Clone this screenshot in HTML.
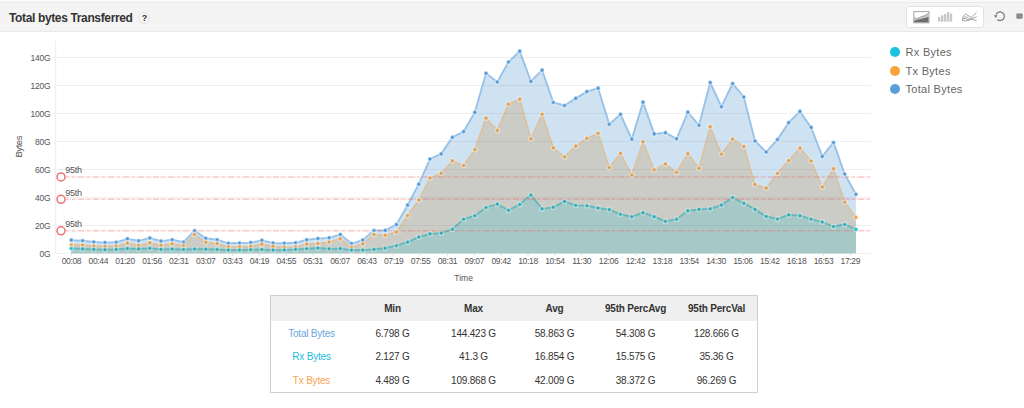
<!DOCTYPE html>
<html><head><meta charset="utf-8">
<style>
html,body{margin:0;padding:0;background:#fff;}
body{width:1024px;height:408px;overflow:hidden;position:relative;font-family:"Liberation Sans",sans-serif;}
svg text{font-family:"Liberation Sans",sans-serif;}
.top{position:absolute;left:0;top:0;width:1024px;height:2px;background:#f9f9f9;}
.hdr{position:absolute;left:0;top:2px;width:1024px;height:30px;background:#f4f4f4;border-top:1px solid #ebebeb;border-bottom:1px solid #e9e9e9;box-sizing:border-box;}
.title{position:absolute;left:9px;top:11px;font-size:12px;font-weight:bold;color:#333;letter-spacing:-0.36px;}
.q{position:absolute;left:138px;top:11.5px;width:12px;height:12px;border:1px solid #e4e4e4;border-radius:50%;background:#f6f6f6;box-sizing:border-box;font-size:9px;font-weight:bold;color:#333;text-align:center;line-height:11px;letter-spacing:-0.5px;text-indent:0.5px;}
.btns{position:absolute;left:906px;top:6px;width:78px;height:22px;background:#fff;border:1px solid #e2e2e2;border-radius:3px;box-sizing:border-box;}
.leg{position:absolute;left:890px;font-size:11px;color:#666;letter-spacing:0.3px;}
.leg i{position:absolute;left:0;top:1px;width:10px;height:10px;border-radius:50%;}
.leg span{position:absolute;left:15.5px;top:0;white-space:nowrap;}
table{position:absolute;left:270px;top:295px;width:488px;border-collapse:collapse;border:1px solid #cfcfcf;font-size:10px;color:#333;letter-spacing:-0.2px;}
th{background:#efefef;height:25px;font-weight:bold;padding:0;text-align:center;width:81px;}
td{height:22.67px;padding:1px 0 0 0;text-align:center;}
</style></head><body>
<div class="top"></div><div class="hdr"></div>
<div class="title">Total bytes Transferred</div>
<div class="q">?</div>
<div class="btns"></div>
<svg width="1024" height="32" style="position:absolute;left:0;top:0">
<rect x="913.8" y="11.6" width="15.2" height="11.2" fill="#fff" stroke="#a2a2a2" stroke-width="1"/>
<polygon points="914.3,17.6 916.9,18.7 920.8,16.9 924.7,15.6 928.5,13.4 928.5,22.3 914.3,22.3" fill="#c4c4c4"/>
<polyline points="914.3,17.6 916.9,18.7 920.8,16.9 924.7,15.6 928.5,13.4" fill="none" stroke="#a8a8a8" stroke-width="1"/>
<polygon points="914.3,20.4 918.8,19.6 922.8,18.6 928.5,17.1 928.5,22.3 914.3,22.3" fill="#6e6e6e"/>
<rect x="938" y="17" width="2.4" height="4.7" fill="#c8c8c8"/>
<rect x="941" y="15.3" width="2.4" height="6.4" fill="#c8c8c8"/>
<rect x="944" y="13.9" width="2.4" height="7.8" fill="#c8c8c8"/>
<rect x="947" y="12" width="2.4" height="9.7" fill="#c8c8c8"/>
<rect x="950" y="13.7" width="2.2" height="8" fill="#c8c8c8"/>
<g fill="none" stroke="#9c9c9c" stroke-width="0.9">
<polyline points="962,17.4 965.6,14.1 971.3,17.4 976.6,12.4"/>
<polyline points="962,18.8 966,16.6 970,19.3 976.6,16.8"/>
<polyline points="962,20.4 965.8,21 970.9,19.2 976.6,20.6"/>
<polyline points="962,19.6 965.3,18.4 968.6,20.4 972,18.6"/>
</g>
<path d="M996.1,14.6 A4.3,4.3 0 1 1 997.3,19.5" fill="none" stroke="#7a7a7a" stroke-width="1.25"/>
<polygon points="993.9,15.3 997.6,15.3 995.6,17.9" fill="#7a7a7a"/>
<rect x="1016.4" y="13.5" width="6.2" height="5.2" rx="0.8" fill="#858585"/>
<line x1="1017.5" y1="14.2" x2="1021.5" y2="18" stroke="#a8a8a8" stroke-width="0.8"/>
</svg>
<svg width="1024" height="260" viewBox="0 0 1024 260" style="position:absolute;left:0;top:32px" >
<g transform="translate(0,-32)">
<line x1="55.7" y1="41" x2="55.7" y2="253.3" stroke="#ececec" stroke-width="1"/>
<line x1="53.5" y1="57.5" x2="871" y2="57.5" stroke="#efefef" stroke-width="1"/>
<text x="50.5" y="60.5" text-anchor="end" font-size="8.5" letter-spacing="-0.2" fill="#555">140G</text>
<line x1="53.5" y1="85.5" x2="871" y2="85.5" stroke="#efefef" stroke-width="1"/>
<text x="50.5" y="88.5" text-anchor="end" font-size="8.5" letter-spacing="-0.2" fill="#555">120G</text>
<line x1="53.5" y1="113.5" x2="871" y2="113.5" stroke="#efefef" stroke-width="1"/>
<text x="50.5" y="116.5" text-anchor="end" font-size="8.5" letter-spacing="-0.2" fill="#555">100G</text>
<line x1="53.5" y1="141.5" x2="871" y2="141.5" stroke="#efefef" stroke-width="1"/>
<text x="50.5" y="144.5" text-anchor="end" font-size="8.5" letter-spacing="-0.2" fill="#555">80G</text>
<line x1="53.5" y1="169.5" x2="871" y2="169.5" stroke="#efefef" stroke-width="1"/>
<text x="50.5" y="172.5" text-anchor="end" font-size="8.5" letter-spacing="-0.2" fill="#555">60G</text>
<line x1="53.5" y1="197.5" x2="871" y2="197.5" stroke="#efefef" stroke-width="1"/>
<text x="50.5" y="200.5" text-anchor="end" font-size="8.5" letter-spacing="-0.2" fill="#555">40G</text>
<line x1="53.5" y1="225.5" x2="871" y2="225.5" stroke="#efefef" stroke-width="1"/>
<text x="50.5" y="228.5" text-anchor="end" font-size="8.5" letter-spacing="-0.2" fill="#555">20G</text>
<line x1="53.5" y1="253.5" x2="871" y2="253.5" stroke="#efefef" stroke-width="1"/>
<text x="50.5" y="256.5" text-anchor="end" font-size="8.5" letter-spacing="-0.2" fill="#555">0G</text>
<line x1="71.4" y1="253.3" x2="71.4" y2="256" stroke="#e4e4e4" stroke-width="1"/>
<text x="71.4" y="263.7" text-anchor="middle" font-size="8.5" letter-spacing="-0.35" fill="#555">00:08</text>
<line x1="98.3" y1="253.3" x2="98.3" y2="256" stroke="#e4e4e4" stroke-width="1"/>
<text x="98.3" y="263.7" text-anchor="middle" font-size="8.5" letter-spacing="-0.35" fill="#555">00:44</text>
<line x1="125.1" y1="253.3" x2="125.1" y2="256" stroke="#e4e4e4" stroke-width="1"/>
<text x="125.1" y="263.7" text-anchor="middle" font-size="8.5" letter-spacing="-0.35" fill="#555">01:20</text>
<line x1="152.0" y1="253.3" x2="152.0" y2="256" stroke="#e4e4e4" stroke-width="1"/>
<text x="152.0" y="263.7" text-anchor="middle" font-size="8.5" letter-spacing="-0.35" fill="#555">01:56</text>
<line x1="178.8" y1="253.3" x2="178.8" y2="256" stroke="#e4e4e4" stroke-width="1"/>
<text x="178.8" y="263.7" text-anchor="middle" font-size="8.5" letter-spacing="-0.35" fill="#555">02:31</text>
<line x1="205.7" y1="253.3" x2="205.7" y2="256" stroke="#e4e4e4" stroke-width="1"/>
<text x="205.7" y="263.7" text-anchor="middle" font-size="8.5" letter-spacing="-0.35" fill="#555">03:07</text>
<line x1="232.6" y1="253.3" x2="232.6" y2="256" stroke="#e4e4e4" stroke-width="1"/>
<text x="232.6" y="263.7" text-anchor="middle" font-size="8.5" letter-spacing="-0.35" fill="#555">03:43</text>
<line x1="259.4" y1="253.3" x2="259.4" y2="256" stroke="#e4e4e4" stroke-width="1"/>
<text x="259.4" y="263.7" text-anchor="middle" font-size="8.5" letter-spacing="-0.35" fill="#555">04:19</text>
<line x1="286.3" y1="253.3" x2="286.3" y2="256" stroke="#e4e4e4" stroke-width="1"/>
<text x="286.3" y="263.7" text-anchor="middle" font-size="8.5" letter-spacing="-0.35" fill="#555">04:55</text>
<line x1="313.1" y1="253.3" x2="313.1" y2="256" stroke="#e4e4e4" stroke-width="1"/>
<text x="313.1" y="263.7" text-anchor="middle" font-size="8.5" letter-spacing="-0.35" fill="#555">05:31</text>
<line x1="340.0" y1="253.3" x2="340.0" y2="256" stroke="#e4e4e4" stroke-width="1"/>
<text x="340.0" y="263.7" text-anchor="middle" font-size="8.5" letter-spacing="-0.35" fill="#555">06:07</text>
<line x1="366.9" y1="253.3" x2="366.9" y2="256" stroke="#e4e4e4" stroke-width="1"/>
<text x="366.9" y="263.7" text-anchor="middle" font-size="8.5" letter-spacing="-0.35" fill="#555">06:43</text>
<line x1="393.7" y1="253.3" x2="393.7" y2="256" stroke="#e4e4e4" stroke-width="1"/>
<text x="393.7" y="263.7" text-anchor="middle" font-size="8.5" letter-spacing="-0.35" fill="#555">07:19</text>
<line x1="420.6" y1="253.3" x2="420.6" y2="256" stroke="#e4e4e4" stroke-width="1"/>
<text x="420.6" y="263.7" text-anchor="middle" font-size="8.5" letter-spacing="-0.35" fill="#555">07:55</text>
<line x1="447.4" y1="253.3" x2="447.4" y2="256" stroke="#e4e4e4" stroke-width="1"/>
<text x="447.4" y="263.7" text-anchor="middle" font-size="8.5" letter-spacing="-0.35" fill="#555">08:31</text>
<line x1="474.3" y1="253.3" x2="474.3" y2="256" stroke="#e4e4e4" stroke-width="1"/>
<text x="474.3" y="263.7" text-anchor="middle" font-size="8.5" letter-spacing="-0.35" fill="#555">09:07</text>
<line x1="501.2" y1="253.3" x2="501.2" y2="256" stroke="#e4e4e4" stroke-width="1"/>
<text x="501.2" y="263.7" text-anchor="middle" font-size="8.5" letter-spacing="-0.35" fill="#555">09:42</text>
<line x1="528.0" y1="253.3" x2="528.0" y2="256" stroke="#e4e4e4" stroke-width="1"/>
<text x="528.0" y="263.7" text-anchor="middle" font-size="8.5" letter-spacing="-0.35" fill="#555">10:18</text>
<line x1="554.9" y1="253.3" x2="554.9" y2="256" stroke="#e4e4e4" stroke-width="1"/>
<text x="554.9" y="263.7" text-anchor="middle" font-size="8.5" letter-spacing="-0.35" fill="#555">10:54</text>
<line x1="581.7" y1="253.3" x2="581.7" y2="256" stroke="#e4e4e4" stroke-width="1"/>
<text x="581.7" y="263.7" text-anchor="middle" font-size="8.5" letter-spacing="-0.35" fill="#555">11:30</text>
<line x1="608.6" y1="253.3" x2="608.6" y2="256" stroke="#e4e4e4" stroke-width="1"/>
<text x="608.6" y="263.7" text-anchor="middle" font-size="8.5" letter-spacing="-0.35" fill="#555">12:06</text>
<line x1="635.5" y1="253.3" x2="635.5" y2="256" stroke="#e4e4e4" stroke-width="1"/>
<text x="635.5" y="263.7" text-anchor="middle" font-size="8.5" letter-spacing="-0.35" fill="#555">12:42</text>
<line x1="662.3" y1="253.3" x2="662.3" y2="256" stroke="#e4e4e4" stroke-width="1"/>
<text x="662.3" y="263.7" text-anchor="middle" font-size="8.5" letter-spacing="-0.35" fill="#555">13:18</text>
<line x1="689.2" y1="253.3" x2="689.2" y2="256" stroke="#e4e4e4" stroke-width="1"/>
<text x="689.2" y="263.7" text-anchor="middle" font-size="8.5" letter-spacing="-0.35" fill="#555">13:54</text>
<line x1="716.0" y1="253.3" x2="716.0" y2="256" stroke="#e4e4e4" stroke-width="1"/>
<text x="716.0" y="263.7" text-anchor="middle" font-size="8.5" letter-spacing="-0.35" fill="#555">14:30</text>
<line x1="742.9" y1="253.3" x2="742.9" y2="256" stroke="#e4e4e4" stroke-width="1"/>
<text x="742.9" y="263.7" text-anchor="middle" font-size="8.5" letter-spacing="-0.35" fill="#555">15:06</text>
<line x1="769.8" y1="253.3" x2="769.8" y2="256" stroke="#e4e4e4" stroke-width="1"/>
<text x="769.8" y="263.7" text-anchor="middle" font-size="8.5" letter-spacing="-0.35" fill="#555">15:42</text>
<line x1="796.6" y1="253.3" x2="796.6" y2="256" stroke="#e4e4e4" stroke-width="1"/>
<text x="796.6" y="263.7" text-anchor="middle" font-size="8.5" letter-spacing="-0.35" fill="#555">16:18</text>
<line x1="823.5" y1="253.3" x2="823.5" y2="256" stroke="#e4e4e4" stroke-width="1"/>
<text x="823.5" y="263.7" text-anchor="middle" font-size="8.5" letter-spacing="-0.35" fill="#555">16:53</text>
<line x1="850.3" y1="253.3" x2="850.3" y2="256" stroke="#e4e4e4" stroke-width="1"/>
<text x="850.3" y="263.7" text-anchor="middle" font-size="8.5" letter-spacing="-0.35" fill="#555">17:29</text>
<text x="463.6" y="281" text-anchor="middle" font-size="8.5" fill="#555">Time</text>
<text transform="translate(21.6,146.8) rotate(-90)" text-anchor="middle" font-size="9.5" letter-spacing="-0.45" fill="#555">Bytes</text>
<polygon points="71.3,253.3 71.3,240.1 82.6,240.8 93.8,242.0 105.0,242.6 116.2,242.3 127.4,238.9 138.6,240.8 149.8,238.0 161.0,241.1 172.2,239.8 183.4,242.2 194.6,230.7 205.8,238.3 217.1,239.8 228.3,243.3 239.5,243.0 250.7,242.6 261.9,240.4 273.1,243.0 284.3,243.3 295.5,242.8 306.7,239.8 317.9,238.6 329.1,237.9 340.3,234.5 351.5,243.6 362.8,240.1 374.0,230.5 385.2,230.4 396.4,224.6 407.6,205.1 418.8,184.2 430.0,159.0 441.2,153.9 452.4,137.3 463.6,131.6 474.8,112.4 486.0,73.3 497.3,82.0 508.5,62.0 519.7,51.2 530.9,81.4 542.1,70.2 553.3,102.5 564.5,105.5 575.7,98.4 586.9,91.6 598.1,88.2 609.3,124.3 620.5,114.4 631.8,139.2 643.0,102.2 654.2,133.9 665.4,132.7 676.6,138.8 687.8,112.2 699.0,125.3 710.2,82.5 721.4,106.7 732.6,83.5 743.8,97.1 755.0,141.0 766.2,152.0 777.5,139.6 788.7,122.7 799.9,111.4 811.1,127.4 822.3,156.4 833.5,142.5 844.7,174.0 855.9,194.3 855.9,253.3" fill="#cfe2f2"/>
<polygon points="71.3,253.3 71.3,244.8 82.6,245.0 93.8,246.0 105.0,246.4 116.2,246.1 127.4,243.0 138.6,245.4 149.8,242.8 161.0,245.3 172.2,243.8 183.4,245.5 194.6,234.5 205.8,242.3 217.1,243.5 228.3,246.9 239.5,246.9 250.7,246.4 261.9,244.1 273.1,246.4 284.3,247.2 295.5,246.9 306.7,244.1 317.9,243.6 329.1,242.0 340.3,238.8 351.5,247.2 362.8,243.8 374.0,234.5 385.2,235.3 396.4,232.0 407.6,215.7 418.8,200.0 430.0,178.0 441.2,173.3 452.4,160.8 463.6,165.5 474.8,149.6 486.0,118.2 497.3,130.4 508.5,104.2 519.7,99.2 530.9,138.8 542.1,114.3 553.3,147.8 564.5,156.9 575.7,146.1 586.9,138.4 598.1,133.3 609.3,167.5 620.5,153.4 631.8,175.1 643.0,141.8 654.2,169.8 665.4,163.9 676.6,172.4 687.8,153.7 699.0,168.4 710.2,126.7 721.4,154.3 732.6,139.2 743.8,146.5 755.0,184.4 766.2,188.1 777.5,173.3 788.7,160.6 799.9,148.2 811.1,161.0 822.3,187.0 833.5,168.7 844.7,202.2 855.9,217.4 855.9,253.3" fill="#caccc5"/>
<polygon points="71.3,253.3 71.3,248.5 82.6,248.9 93.8,249.4 105.0,249.7 116.2,249.4 127.4,248.6 138.6,248.9 149.8,248.3 161.0,249.4 172.2,249.1 183.4,249.5 194.6,249.1 205.8,249.2 217.1,249.5 228.3,250.1 239.5,250.1 250.7,249.7 261.9,249.5 273.1,250.1 284.3,250.1 295.5,249.4 306.7,248.8 317.9,248.0 329.1,248.8 340.3,248.6 351.5,250.1 362.8,250.1 374.0,249.4 385.2,248.2 396.4,245.7 407.6,242.2 418.8,237.1 430.0,233.9 441.2,233.1 452.4,229.2 463.6,219.2 474.8,215.7 486.0,207.5 497.3,204.1 508.5,210.3 519.7,204.5 530.9,195.1 542.1,208.8 553.3,207.3 564.5,201.4 575.7,205.3 586.9,205.7 598.1,208.0 609.3,209.6 620.5,214.3 631.8,216.7 643.0,212.7 654.2,216.7 665.4,221.4 676.6,219.2 687.8,210.8 699.0,209.4 710.2,208.8 721.4,205.1 732.6,197.5 743.8,203.3 755.0,209.4 766.2,216.5 777.5,219.0 788.7,214.9 799.9,215.7 811.1,219.2 822.3,222.0 833.5,226.5 844.7,224.5 855.9,229.4 855.9,253.3" fill="#a6c9c7"/>
<polyline points="71.3,240.1 82.6,240.8 93.8,242.0 105.0,242.6 116.2,242.3 127.4,238.9 138.6,240.8 149.8,238.0 161.0,241.1 172.2,239.8 183.4,242.2 194.6,230.7 205.8,238.3 217.1,239.8 228.3,243.3 239.5,243.0 250.7,242.6 261.9,240.4 273.1,243.0 284.3,243.3 295.5,242.8 306.7,239.8 317.9,238.6 329.1,237.9 340.3,234.5 351.5,243.6 362.8,240.1 374.0,230.5 385.2,230.4 396.4,224.6 407.6,205.1 418.8,184.2 430.0,159.0 441.2,153.9 452.4,137.3 463.6,131.6 474.8,112.4 486.0,73.3 497.3,82.0 508.5,62.0 519.7,51.2 530.9,81.4 542.1,70.2 553.3,102.5 564.5,105.5 575.7,98.4 586.9,91.6 598.1,88.2 609.3,124.3 620.5,114.4 631.8,139.2 643.0,102.2 654.2,133.9 665.4,132.7 676.6,138.8 687.8,112.2 699.0,125.3 710.2,82.5 721.4,106.7 732.6,83.5 743.8,97.1 755.0,141.0 766.2,152.0 777.5,139.6 788.7,122.7 799.9,111.4 811.1,127.4 822.3,156.4 833.5,142.5 844.7,174.0 855.9,194.3" fill="none" stroke="#98c2e8" stroke-width="1.9"/>
<polyline points="71.3,244.8 82.6,245.0 93.8,246.0 105.0,246.4 116.2,246.1 127.4,243.0 138.6,245.4 149.8,242.8 161.0,245.3 172.2,243.8 183.4,245.5 194.6,234.5 205.8,242.3 217.1,243.5 228.3,246.9 239.5,246.9 250.7,246.4 261.9,244.1 273.1,246.4 284.3,247.2 295.5,246.9 306.7,244.1 317.9,243.6 329.1,242.0 340.3,238.8 351.5,247.2 362.8,243.8 374.0,234.5 385.2,235.3 396.4,232.0 407.6,215.7 418.8,200.0 430.0,178.0 441.2,173.3 452.4,160.8 463.6,165.5 474.8,149.6 486.0,118.2 497.3,130.4 508.5,104.2 519.7,99.2 530.9,138.8 542.1,114.3 553.3,147.8 564.5,156.9 575.7,146.1 586.9,138.4 598.1,133.3 609.3,167.5 620.5,153.4 631.8,175.1 643.0,141.8 654.2,169.8 665.4,163.9 676.6,172.4 687.8,153.7 699.0,168.4 710.2,126.7 721.4,154.3 732.6,139.2 743.8,146.5 755.0,184.4 766.2,188.1 777.5,173.3 788.7,160.6 799.9,148.2 811.1,161.0 822.3,187.0 833.5,168.7 844.7,202.2 855.9,217.4" fill="none" stroke="#dfbf98" stroke-width="1.5"/>
<polyline points="71.3,248.5 82.6,248.9 93.8,249.4 105.0,249.7 116.2,249.4 127.4,248.6 138.6,248.9 149.8,248.3 161.0,249.4 172.2,249.1 183.4,249.5 194.6,249.1 205.8,249.2 217.1,249.5 228.3,250.1 239.5,250.1 250.7,249.7 261.9,249.5 273.1,250.1 284.3,250.1 295.5,249.4 306.7,248.8 317.9,248.0 329.1,248.8 340.3,248.6 351.5,250.1 362.8,250.1 374.0,249.4 385.2,248.2 396.4,245.7 407.6,242.2 418.8,237.1 430.0,233.9 441.2,233.1 452.4,229.2 463.6,219.2 474.8,215.7 486.0,207.5 497.3,204.1 508.5,210.3 519.7,204.5 530.9,195.1 542.1,208.8 553.3,207.3 564.5,201.4 575.7,205.3 586.9,205.7 598.1,208.0 609.3,209.6 620.5,214.3 631.8,216.7 643.0,212.7 654.2,216.7 665.4,221.4 676.6,219.2 687.8,210.8 699.0,209.4 710.2,208.8 721.4,205.1 732.6,197.5 743.8,203.3 755.0,209.4 766.2,216.5 777.5,219.0 788.7,214.9 799.9,215.7 811.1,219.2 822.3,222.0 833.5,226.5 844.7,224.5 855.9,229.4" fill="none" stroke="#66b7b9" stroke-width="1.8"/>
<clipPath id="ca"><polygon points="71.3,253.3 71.3,240.1 82.6,240.8 93.8,242.0 105.0,242.6 116.2,242.3 127.4,238.9 138.6,240.8 149.8,238.0 161.0,241.1 172.2,239.8 183.4,242.2 194.6,230.7 205.8,238.3 217.1,239.8 228.3,243.3 239.5,243.0 250.7,242.6 261.9,240.4 273.1,243.0 284.3,243.3 295.5,242.8 306.7,239.8 317.9,238.6 329.1,237.9 340.3,234.5 351.5,243.6 362.8,240.1 374.0,230.5 385.2,230.4 396.4,224.6 407.6,205.1 418.8,184.2 430.0,159.0 441.2,153.9 452.4,137.3 463.6,131.6 474.8,112.4 486.0,73.3 497.3,82.0 508.5,62.0 519.7,51.2 530.9,81.4 542.1,70.2 553.3,102.5 564.5,105.5 575.7,98.4 586.9,91.6 598.1,88.2 609.3,124.3 620.5,114.4 631.8,139.2 643.0,102.2 654.2,133.9 665.4,132.7 676.6,138.8 687.8,112.2 699.0,125.3 710.2,82.5 721.4,106.7 732.6,83.5 743.8,97.1 755.0,141.0 766.2,152.0 777.5,139.6 788.7,122.7 799.9,111.4 811.1,127.4 822.3,156.4 833.5,142.5 844.7,174.0 855.9,194.3 855.9,253.3"/></clipPath><g clip-path="url(#ca)">
<line x1="71.35" y1="57.5" x2="856" y2="57.5" stroke="#000" stroke-opacity="0.05" stroke-width="1"/>
<line x1="71.35" y1="85.5" x2="856" y2="85.5" stroke="#000" stroke-opacity="0.05" stroke-width="1"/>
<line x1="71.35" y1="113.5" x2="856" y2="113.5" stroke="#000" stroke-opacity="0.05" stroke-width="1"/>
<line x1="71.35" y1="141.5" x2="856" y2="141.5" stroke="#000" stroke-opacity="0.05" stroke-width="1"/>
<line x1="71.35" y1="169.5" x2="856" y2="169.5" stroke="#000" stroke-opacity="0.05" stroke-width="1"/>
<line x1="71.35" y1="197.5" x2="856" y2="197.5" stroke="#000" stroke-opacity="0.05" stroke-width="1"/>
<line x1="71.35" y1="225.5" x2="856" y2="225.5" stroke="#000" stroke-opacity="0.05" stroke-width="1"/>
</g>
<line x1="65.6" y1="176.9" x2="871" y2="176.9" stroke="#ee5a5a" stroke-opacity="0.34" stroke-width="1.5" stroke-dasharray="6.2,1,0.8,1,3,1,0.8,1.2" stroke-dashoffset="2.7"/>
<circle cx="61" cy="176.9" r="4" fill="#fff" stroke="#ef7373" stroke-width="1.5"/>
<text x="65.3" y="173.4" font-size="9" letter-spacing="-0.3" fill="#555">95th</text>
<line x1="65.6" y1="199.3" x2="871" y2="199.3" stroke="#ee5a5a" stroke-opacity="0.34" stroke-width="1.5" stroke-dasharray="6.2,1,0.8,1,3,1,0.8,1.2" stroke-dashoffset="2.7"/>
<circle cx="61" cy="199.3" r="4" fill="#fff" stroke="#ef7373" stroke-width="1.5"/>
<text x="65.3" y="195.8" font-size="9" letter-spacing="-0.3" fill="#555">95th</text>
<line x1="65.6" y1="230.8" x2="871" y2="230.8" stroke="#ee5a5a" stroke-opacity="0.34" stroke-width="1.5" stroke-dasharray="6.2,1,0.8,1,3,1,0.8,1.2" stroke-dashoffset="2.7"/>
<circle cx="61" cy="230.8" r="4" fill="#fff" stroke="#ef7373" stroke-width="1.5"/>
<text x="65.3" y="227.3" font-size="9" letter-spacing="-0.3" fill="#555">95th</text>
<circle cx="71.3" cy="240.1" r="2.1" fill="#4f99da" stroke="rgba(255,255,255,0.4)" stroke-width="1.6"/>
<circle cx="82.6" cy="240.8" r="2.1" fill="#4f99da" stroke="rgba(255,255,255,0.4)" stroke-width="1.6"/>
<circle cx="93.8" cy="242.0" r="2.1" fill="#4f99da" stroke="rgba(255,255,255,0.4)" stroke-width="1.6"/>
<circle cx="105.0" cy="242.6" r="2.1" fill="#4f99da" stroke="rgba(255,255,255,0.4)" stroke-width="1.6"/>
<circle cx="116.2" cy="242.3" r="2.1" fill="#4f99da" stroke="rgba(255,255,255,0.4)" stroke-width="1.6"/>
<circle cx="127.4" cy="238.9" r="2.1" fill="#4f99da" stroke="rgba(255,255,255,0.4)" stroke-width="1.6"/>
<circle cx="138.6" cy="240.8" r="2.1" fill="#4f99da" stroke="rgba(255,255,255,0.4)" stroke-width="1.6"/>
<circle cx="149.8" cy="238.0" r="2.1" fill="#4f99da" stroke="rgba(255,255,255,0.4)" stroke-width="1.6"/>
<circle cx="161.0" cy="241.1" r="2.1" fill="#4f99da" stroke="rgba(255,255,255,0.4)" stroke-width="1.6"/>
<circle cx="172.2" cy="239.8" r="2.1" fill="#4f99da" stroke="rgba(255,255,255,0.4)" stroke-width="1.6"/>
<circle cx="183.4" cy="242.2" r="2.1" fill="#4f99da" stroke="rgba(255,255,255,0.4)" stroke-width="1.6"/>
<circle cx="194.6" cy="230.7" r="2.1" fill="#4f99da" stroke="rgba(255,255,255,0.4)" stroke-width="1.6"/>
<circle cx="205.8" cy="238.3" r="2.1" fill="#4f99da" stroke="rgba(255,255,255,0.4)" stroke-width="1.6"/>
<circle cx="217.1" cy="239.8" r="2.1" fill="#4f99da" stroke="rgba(255,255,255,0.4)" stroke-width="1.6"/>
<circle cx="228.3" cy="243.3" r="2.1" fill="#4f99da" stroke="rgba(255,255,255,0.4)" stroke-width="1.6"/>
<circle cx="239.5" cy="243.0" r="2.1" fill="#4f99da" stroke="rgba(255,255,255,0.4)" stroke-width="1.6"/>
<circle cx="250.7" cy="242.6" r="2.1" fill="#4f99da" stroke="rgba(255,255,255,0.4)" stroke-width="1.6"/>
<circle cx="261.9" cy="240.4" r="2.1" fill="#4f99da" stroke="rgba(255,255,255,0.4)" stroke-width="1.6"/>
<circle cx="273.1" cy="243.0" r="2.1" fill="#4f99da" stroke="rgba(255,255,255,0.4)" stroke-width="1.6"/>
<circle cx="284.3" cy="243.3" r="2.1" fill="#4f99da" stroke="rgba(255,255,255,0.4)" stroke-width="1.6"/>
<circle cx="295.5" cy="242.8" r="2.1" fill="#4f99da" stroke="rgba(255,255,255,0.4)" stroke-width="1.6"/>
<circle cx="306.7" cy="239.8" r="2.1" fill="#4f99da" stroke="rgba(255,255,255,0.4)" stroke-width="1.6"/>
<circle cx="317.9" cy="238.6" r="2.1" fill="#4f99da" stroke="rgba(255,255,255,0.4)" stroke-width="1.6"/>
<circle cx="329.1" cy="237.9" r="2.1" fill="#4f99da" stroke="rgba(255,255,255,0.4)" stroke-width="1.6"/>
<circle cx="340.3" cy="234.5" r="2.1" fill="#4f99da" stroke="rgba(255,255,255,0.4)" stroke-width="1.6"/>
<circle cx="351.5" cy="243.6" r="2.1" fill="#4f99da" stroke="rgba(255,255,255,0.4)" stroke-width="1.6"/>
<circle cx="362.8" cy="240.1" r="2.1" fill="#4f99da" stroke="rgba(255,255,255,0.4)" stroke-width="1.6"/>
<circle cx="374.0" cy="230.5" r="2.1" fill="#4f99da" stroke="rgba(255,255,255,0.4)" stroke-width="1.6"/>
<circle cx="385.2" cy="230.4" r="2.1" fill="#4f99da" stroke="rgba(255,255,255,0.4)" stroke-width="1.6"/>
<circle cx="396.4" cy="224.6" r="2.1" fill="#4f99da" stroke="rgba(255,255,255,0.4)" stroke-width="1.6"/>
<circle cx="407.6" cy="205.1" r="2.1" fill="#4f99da" stroke="rgba(255,255,255,0.4)" stroke-width="1.6"/>
<circle cx="418.8" cy="184.2" r="2.1" fill="#4f99da" stroke="rgba(255,255,255,0.4)" stroke-width="1.6"/>
<circle cx="430.0" cy="159.0" r="2.1" fill="#4f99da" stroke="rgba(255,255,255,0.4)" stroke-width="1.6"/>
<circle cx="441.2" cy="153.9" r="2.1" fill="#4f99da" stroke="rgba(255,255,255,0.4)" stroke-width="1.6"/>
<circle cx="452.4" cy="137.3" r="2.1" fill="#4f99da" stroke="rgba(255,255,255,0.4)" stroke-width="1.6"/>
<circle cx="463.6" cy="131.6" r="2.1" fill="#4f99da" stroke="rgba(255,255,255,0.4)" stroke-width="1.6"/>
<circle cx="474.8" cy="112.4" r="2.1" fill="#4f99da" stroke="rgba(255,255,255,0.4)" stroke-width="1.6"/>
<circle cx="486.0" cy="73.3" r="2.1" fill="#4f99da" stroke="rgba(255,255,255,0.4)" stroke-width="1.6"/>
<circle cx="497.3" cy="82.0" r="2.1" fill="#4f99da" stroke="rgba(255,255,255,0.4)" stroke-width="1.6"/>
<circle cx="508.5" cy="62.0" r="2.1" fill="#4f99da" stroke="rgba(255,255,255,0.4)" stroke-width="1.6"/>
<circle cx="519.7" cy="51.2" r="2.1" fill="#4f99da" stroke="rgba(255,255,255,0.4)" stroke-width="1.6"/>
<circle cx="530.9" cy="81.4" r="2.1" fill="#4f99da" stroke="rgba(255,255,255,0.4)" stroke-width="1.6"/>
<circle cx="542.1" cy="70.2" r="2.1" fill="#4f99da" stroke="rgba(255,255,255,0.4)" stroke-width="1.6"/>
<circle cx="553.3" cy="102.5" r="2.1" fill="#4f99da" stroke="rgba(255,255,255,0.4)" stroke-width="1.6"/>
<circle cx="564.5" cy="105.5" r="2.1" fill="#4f99da" stroke="rgba(255,255,255,0.4)" stroke-width="1.6"/>
<circle cx="575.7" cy="98.4" r="2.1" fill="#4f99da" stroke="rgba(255,255,255,0.4)" stroke-width="1.6"/>
<circle cx="586.9" cy="91.6" r="2.1" fill="#4f99da" stroke="rgba(255,255,255,0.4)" stroke-width="1.6"/>
<circle cx="598.1" cy="88.2" r="2.1" fill="#4f99da" stroke="rgba(255,255,255,0.4)" stroke-width="1.6"/>
<circle cx="609.3" cy="124.3" r="2.1" fill="#4f99da" stroke="rgba(255,255,255,0.4)" stroke-width="1.6"/>
<circle cx="620.5" cy="114.4" r="2.1" fill="#4f99da" stroke="rgba(255,255,255,0.4)" stroke-width="1.6"/>
<circle cx="631.8" cy="139.2" r="2.1" fill="#4f99da" stroke="rgba(255,255,255,0.4)" stroke-width="1.6"/>
<circle cx="643.0" cy="102.2" r="2.1" fill="#4f99da" stroke="rgba(255,255,255,0.4)" stroke-width="1.6"/>
<circle cx="654.2" cy="133.9" r="2.1" fill="#4f99da" stroke="rgba(255,255,255,0.4)" stroke-width="1.6"/>
<circle cx="665.4" cy="132.7" r="2.1" fill="#4f99da" stroke="rgba(255,255,255,0.4)" stroke-width="1.6"/>
<circle cx="676.6" cy="138.8" r="2.1" fill="#4f99da" stroke="rgba(255,255,255,0.4)" stroke-width="1.6"/>
<circle cx="687.8" cy="112.2" r="2.1" fill="#4f99da" stroke="rgba(255,255,255,0.4)" stroke-width="1.6"/>
<circle cx="699.0" cy="125.3" r="2.1" fill="#4f99da" stroke="rgba(255,255,255,0.4)" stroke-width="1.6"/>
<circle cx="710.2" cy="82.5" r="2.1" fill="#4f99da" stroke="rgba(255,255,255,0.4)" stroke-width="1.6"/>
<circle cx="721.4" cy="106.7" r="2.1" fill="#4f99da" stroke="rgba(255,255,255,0.4)" stroke-width="1.6"/>
<circle cx="732.6" cy="83.5" r="2.1" fill="#4f99da" stroke="rgba(255,255,255,0.4)" stroke-width="1.6"/>
<circle cx="743.8" cy="97.1" r="2.1" fill="#4f99da" stroke="rgba(255,255,255,0.4)" stroke-width="1.6"/>
<circle cx="755.0" cy="141.0" r="2.1" fill="#4f99da" stroke="rgba(255,255,255,0.4)" stroke-width="1.6"/>
<circle cx="766.2" cy="152.0" r="2.1" fill="#4f99da" stroke="rgba(255,255,255,0.4)" stroke-width="1.6"/>
<circle cx="777.5" cy="139.6" r="2.1" fill="#4f99da" stroke="rgba(255,255,255,0.4)" stroke-width="1.6"/>
<circle cx="788.7" cy="122.7" r="2.1" fill="#4f99da" stroke="rgba(255,255,255,0.4)" stroke-width="1.6"/>
<circle cx="799.9" cy="111.4" r="2.1" fill="#4f99da" stroke="rgba(255,255,255,0.4)" stroke-width="1.6"/>
<circle cx="811.1" cy="127.4" r="2.1" fill="#4f99da" stroke="rgba(255,255,255,0.4)" stroke-width="1.6"/>
<circle cx="822.3" cy="156.4" r="2.1" fill="#4f99da" stroke="rgba(255,255,255,0.4)" stroke-width="1.6"/>
<circle cx="833.5" cy="142.5" r="2.1" fill="#4f99da" stroke="rgba(255,255,255,0.4)" stroke-width="1.6"/>
<circle cx="844.7" cy="174.0" r="2.1" fill="#4f99da" stroke="rgba(255,255,255,0.4)" stroke-width="1.6"/>
<circle cx="855.9" cy="194.3" r="2.1" fill="#4f99da" stroke="rgba(255,255,255,0.4)" stroke-width="1.6"/>
<circle cx="71.3" cy="244.8" r="2.1" fill="#f3a33f" stroke="rgba(255,255,255,0.4)" stroke-width="1.6"/>
<circle cx="82.6" cy="245.0" r="2.1" fill="#dc9d4c" stroke="rgba(255,255,255,0.4)" stroke-width="1.6"/>
<circle cx="93.8" cy="246.0" r="2.1" fill="#dc9d4c" stroke="rgba(255,255,255,0.4)" stroke-width="1.6"/>
<circle cx="105.0" cy="246.4" r="2.1" fill="#dc9d4c" stroke="rgba(255,255,255,0.4)" stroke-width="1.6"/>
<circle cx="116.2" cy="246.1" r="2.1" fill="#dc9d4c" stroke="rgba(255,255,255,0.4)" stroke-width="1.6"/>
<circle cx="127.4" cy="243.0" r="2.1" fill="#dc9d4c" stroke="rgba(255,255,255,0.4)" stroke-width="1.6"/>
<circle cx="138.6" cy="245.4" r="2.1" fill="#dc9d4c" stroke="rgba(255,255,255,0.4)" stroke-width="1.6"/>
<circle cx="149.8" cy="242.8" r="2.1" fill="#dc9d4c" stroke="rgba(255,255,255,0.4)" stroke-width="1.6"/>
<circle cx="161.0" cy="245.3" r="2.1" fill="#dc9d4c" stroke="rgba(255,255,255,0.4)" stroke-width="1.6"/>
<circle cx="172.2" cy="243.8" r="2.1" fill="#dc9d4c" stroke="rgba(255,255,255,0.4)" stroke-width="1.6"/>
<circle cx="183.4" cy="245.5" r="2.1" fill="#dc9d4c" stroke="rgba(255,255,255,0.4)" stroke-width="1.6"/>
<circle cx="194.6" cy="234.5" r="2.1" fill="#dc9d4c" stroke="rgba(255,255,255,0.4)" stroke-width="1.6"/>
<circle cx="205.8" cy="242.3" r="2.1" fill="#dc9d4c" stroke="rgba(255,255,255,0.4)" stroke-width="1.6"/>
<circle cx="217.1" cy="243.5" r="2.1" fill="#dc9d4c" stroke="rgba(255,255,255,0.4)" stroke-width="1.6"/>
<circle cx="228.3" cy="246.9" r="2.1" fill="#dc9d4c" stroke="rgba(255,255,255,0.4)" stroke-width="1.6"/>
<circle cx="239.5" cy="246.9" r="2.1" fill="#dc9d4c" stroke="rgba(255,255,255,0.4)" stroke-width="1.6"/>
<circle cx="250.7" cy="246.4" r="2.1" fill="#dc9d4c" stroke="rgba(255,255,255,0.4)" stroke-width="1.6"/>
<circle cx="261.9" cy="244.1" r="2.1" fill="#dc9d4c" stroke="rgba(255,255,255,0.4)" stroke-width="1.6"/>
<circle cx="273.1" cy="246.4" r="2.1" fill="#dc9d4c" stroke="rgba(255,255,255,0.4)" stroke-width="1.6"/>
<circle cx="284.3" cy="247.2" r="2.1" fill="#dc9d4c" stroke="rgba(255,255,255,0.4)" stroke-width="1.6"/>
<circle cx="295.5" cy="246.9" r="2.1" fill="#dc9d4c" stroke="rgba(255,255,255,0.4)" stroke-width="1.6"/>
<circle cx="306.7" cy="244.1" r="2.1" fill="#dc9d4c" stroke="rgba(255,255,255,0.4)" stroke-width="1.6"/>
<circle cx="317.9" cy="243.6" r="2.1" fill="#dc9d4c" stroke="rgba(255,255,255,0.4)" stroke-width="1.6"/>
<circle cx="329.1" cy="242.0" r="2.1" fill="#dc9d4c" stroke="rgba(255,255,255,0.4)" stroke-width="1.6"/>
<circle cx="340.3" cy="238.8" r="2.1" fill="#dc9d4c" stroke="rgba(255,255,255,0.4)" stroke-width="1.6"/>
<circle cx="351.5" cy="247.2" r="2.1" fill="#dc9d4c" stroke="rgba(255,255,255,0.4)" stroke-width="1.6"/>
<circle cx="362.8" cy="243.8" r="2.1" fill="#dc9d4c" stroke="rgba(255,255,255,0.4)" stroke-width="1.6"/>
<circle cx="374.0" cy="234.5" r="2.1" fill="#dc9d4c" stroke="rgba(255,255,255,0.4)" stroke-width="1.6"/>
<circle cx="385.2" cy="235.3" r="2.1" fill="#dc9d4c" stroke="rgba(255,255,255,0.4)" stroke-width="1.6"/>
<circle cx="396.4" cy="232.0" r="2.1" fill="#dc9d4c" stroke="rgba(255,255,255,0.4)" stroke-width="1.6"/>
<circle cx="407.6" cy="215.7" r="2.1" fill="#dc9d4c" stroke="rgba(255,255,255,0.4)" stroke-width="1.6"/>
<circle cx="418.8" cy="200.0" r="2.1" fill="#dc9d4c" stroke="rgba(255,255,255,0.4)" stroke-width="1.6"/>
<circle cx="430.0" cy="178.0" r="2.1" fill="#dc9d4c" stroke="rgba(255,255,255,0.4)" stroke-width="1.6"/>
<circle cx="441.2" cy="173.3" r="2.1" fill="#dc9d4c" stroke="rgba(255,255,255,0.4)" stroke-width="1.6"/>
<circle cx="452.4" cy="160.8" r="2.1" fill="#dc9d4c" stroke="rgba(255,255,255,0.4)" stroke-width="1.6"/>
<circle cx="463.6" cy="165.5" r="2.1" fill="#dc9d4c" stroke="rgba(255,255,255,0.4)" stroke-width="1.6"/>
<circle cx="474.8" cy="149.6" r="2.1" fill="#dc9d4c" stroke="rgba(255,255,255,0.4)" stroke-width="1.6"/>
<circle cx="486.0" cy="118.2" r="2.1" fill="#dc9d4c" stroke="rgba(255,255,255,0.4)" stroke-width="1.6"/>
<circle cx="497.3" cy="130.4" r="2.1" fill="#dc9d4c" stroke="rgba(255,255,255,0.4)" stroke-width="1.6"/>
<circle cx="508.5" cy="104.2" r="2.1" fill="#dc9d4c" stroke="rgba(255,255,255,0.4)" stroke-width="1.6"/>
<circle cx="519.7" cy="99.2" r="2.1" fill="#dc9d4c" stroke="rgba(255,255,255,0.4)" stroke-width="1.6"/>
<circle cx="530.9" cy="138.8" r="2.1" fill="#dc9d4c" stroke="rgba(255,255,255,0.4)" stroke-width="1.6"/>
<circle cx="542.1" cy="114.3" r="2.1" fill="#dc9d4c" stroke="rgba(255,255,255,0.4)" stroke-width="1.6"/>
<circle cx="553.3" cy="147.8" r="2.1" fill="#dc9d4c" stroke="rgba(255,255,255,0.4)" stroke-width="1.6"/>
<circle cx="564.5" cy="156.9" r="2.1" fill="#dc9d4c" stroke="rgba(255,255,255,0.4)" stroke-width="1.6"/>
<circle cx="575.7" cy="146.1" r="2.1" fill="#dc9d4c" stroke="rgba(255,255,255,0.4)" stroke-width="1.6"/>
<circle cx="586.9" cy="138.4" r="2.1" fill="#dc9d4c" stroke="rgba(255,255,255,0.4)" stroke-width="1.6"/>
<circle cx="598.1" cy="133.3" r="2.1" fill="#dc9d4c" stroke="rgba(255,255,255,0.4)" stroke-width="1.6"/>
<circle cx="609.3" cy="167.5" r="2.1" fill="#dc9d4c" stroke="rgba(255,255,255,0.4)" stroke-width="1.6"/>
<circle cx="620.5" cy="153.4" r="2.1" fill="#dc9d4c" stroke="rgba(255,255,255,0.4)" stroke-width="1.6"/>
<circle cx="631.8" cy="175.1" r="2.1" fill="#dc9d4c" stroke="rgba(255,255,255,0.4)" stroke-width="1.6"/>
<circle cx="643.0" cy="141.8" r="2.1" fill="#dc9d4c" stroke="rgba(255,255,255,0.4)" stroke-width="1.6"/>
<circle cx="654.2" cy="169.8" r="2.1" fill="#dc9d4c" stroke="rgba(255,255,255,0.4)" stroke-width="1.6"/>
<circle cx="665.4" cy="163.9" r="2.1" fill="#dc9d4c" stroke="rgba(255,255,255,0.4)" stroke-width="1.6"/>
<circle cx="676.6" cy="172.4" r="2.1" fill="#dc9d4c" stroke="rgba(255,255,255,0.4)" stroke-width="1.6"/>
<circle cx="687.8" cy="153.7" r="2.1" fill="#dc9d4c" stroke="rgba(255,255,255,0.4)" stroke-width="1.6"/>
<circle cx="699.0" cy="168.4" r="2.1" fill="#dc9d4c" stroke="rgba(255,255,255,0.4)" stroke-width="1.6"/>
<circle cx="710.2" cy="126.7" r="2.1" fill="#dc9d4c" stroke="rgba(255,255,255,0.4)" stroke-width="1.6"/>
<circle cx="721.4" cy="154.3" r="2.1" fill="#dc9d4c" stroke="rgba(255,255,255,0.4)" stroke-width="1.6"/>
<circle cx="732.6" cy="139.2" r="2.1" fill="#dc9d4c" stroke="rgba(255,255,255,0.4)" stroke-width="1.6"/>
<circle cx="743.8" cy="146.5" r="2.1" fill="#dc9d4c" stroke="rgba(255,255,255,0.4)" stroke-width="1.6"/>
<circle cx="755.0" cy="184.4" r="2.1" fill="#dc9d4c" stroke="rgba(255,255,255,0.4)" stroke-width="1.6"/>
<circle cx="766.2" cy="188.1" r="2.1" fill="#dc9d4c" stroke="rgba(255,255,255,0.4)" stroke-width="1.6"/>
<circle cx="777.5" cy="173.3" r="2.1" fill="#dc9d4c" stroke="rgba(255,255,255,0.4)" stroke-width="1.6"/>
<circle cx="788.7" cy="160.6" r="2.1" fill="#dc9d4c" stroke="rgba(255,255,255,0.4)" stroke-width="1.6"/>
<circle cx="799.9" cy="148.2" r="2.1" fill="#dc9d4c" stroke="rgba(255,255,255,0.4)" stroke-width="1.6"/>
<circle cx="811.1" cy="161.0" r="2.1" fill="#dc9d4c" stroke="rgba(255,255,255,0.4)" stroke-width="1.6"/>
<circle cx="822.3" cy="187.0" r="2.1" fill="#dc9d4c" stroke="rgba(255,255,255,0.4)" stroke-width="1.6"/>
<circle cx="833.5" cy="168.7" r="2.1" fill="#dc9d4c" stroke="rgba(255,255,255,0.4)" stroke-width="1.6"/>
<circle cx="844.7" cy="202.2" r="2.1" fill="#dc9d4c" stroke="rgba(255,255,255,0.4)" stroke-width="1.6"/>
<circle cx="855.9" cy="217.4" r="2.1" fill="#f3a33f" stroke="rgba(255,255,255,0.4)" stroke-width="1.6"/>
<circle cx="71.3" cy="248.5" r="2.1" fill="#1cbcd8" stroke="rgba(255,255,255,0.4)" stroke-width="1.6"/>
<circle cx="82.6" cy="248.9" r="2.1" fill="#2aa8b4" stroke="rgba(255,255,255,0.4)" stroke-width="1.6"/>
<circle cx="93.8" cy="249.4" r="2.1" fill="#2aa8b4" stroke="rgba(255,255,255,0.4)" stroke-width="1.6"/>
<circle cx="105.0" cy="249.7" r="2.1" fill="#2aa8b4" stroke="rgba(255,255,255,0.4)" stroke-width="1.6"/>
<circle cx="116.2" cy="249.4" r="2.1" fill="#2aa8b4" stroke="rgba(255,255,255,0.4)" stroke-width="1.6"/>
<circle cx="127.4" cy="248.6" r="2.1" fill="#2aa8b4" stroke="rgba(255,255,255,0.4)" stroke-width="1.6"/>
<circle cx="138.6" cy="248.9" r="2.1" fill="#2aa8b4" stroke="rgba(255,255,255,0.4)" stroke-width="1.6"/>
<circle cx="149.8" cy="248.3" r="2.1" fill="#2aa8b4" stroke="rgba(255,255,255,0.4)" stroke-width="1.6"/>
<circle cx="161.0" cy="249.4" r="2.1" fill="#2aa8b4" stroke="rgba(255,255,255,0.4)" stroke-width="1.6"/>
<circle cx="172.2" cy="249.1" r="2.1" fill="#2aa8b4" stroke="rgba(255,255,255,0.4)" stroke-width="1.6"/>
<circle cx="183.4" cy="249.5" r="2.1" fill="#2aa8b4" stroke="rgba(255,255,255,0.4)" stroke-width="1.6"/>
<circle cx="194.6" cy="249.1" r="2.1" fill="#2aa8b4" stroke="rgba(255,255,255,0.4)" stroke-width="1.6"/>
<circle cx="205.8" cy="249.2" r="2.1" fill="#2aa8b4" stroke="rgba(255,255,255,0.4)" stroke-width="1.6"/>
<circle cx="217.1" cy="249.5" r="2.1" fill="#2aa8b4" stroke="rgba(255,255,255,0.4)" stroke-width="1.6"/>
<circle cx="228.3" cy="250.1" r="2.1" fill="#2aa8b4" stroke="rgba(255,255,255,0.4)" stroke-width="1.6"/>
<circle cx="239.5" cy="250.1" r="2.1" fill="#2aa8b4" stroke="rgba(255,255,255,0.4)" stroke-width="1.6"/>
<circle cx="250.7" cy="249.7" r="2.1" fill="#2aa8b4" stroke="rgba(255,255,255,0.4)" stroke-width="1.6"/>
<circle cx="261.9" cy="249.5" r="2.1" fill="#2aa8b4" stroke="rgba(255,255,255,0.4)" stroke-width="1.6"/>
<circle cx="273.1" cy="250.1" r="2.1" fill="#2aa8b4" stroke="rgba(255,255,255,0.4)" stroke-width="1.6"/>
<circle cx="284.3" cy="250.1" r="2.1" fill="#2aa8b4" stroke="rgba(255,255,255,0.4)" stroke-width="1.6"/>
<circle cx="295.5" cy="249.4" r="2.1" fill="#2aa8b4" stroke="rgba(255,255,255,0.4)" stroke-width="1.6"/>
<circle cx="306.7" cy="248.8" r="2.1" fill="#2aa8b4" stroke="rgba(255,255,255,0.4)" stroke-width="1.6"/>
<circle cx="317.9" cy="248.0" r="2.1" fill="#2aa8b4" stroke="rgba(255,255,255,0.4)" stroke-width="1.6"/>
<circle cx="329.1" cy="248.8" r="2.1" fill="#2aa8b4" stroke="rgba(255,255,255,0.4)" stroke-width="1.6"/>
<circle cx="340.3" cy="248.6" r="2.1" fill="#2aa8b4" stroke="rgba(255,255,255,0.4)" stroke-width="1.6"/>
<circle cx="351.5" cy="250.1" r="2.1" fill="#2aa8b4" stroke="rgba(255,255,255,0.4)" stroke-width="1.6"/>
<circle cx="362.8" cy="250.1" r="2.1" fill="#2aa8b4" stroke="rgba(255,255,255,0.4)" stroke-width="1.6"/>
<circle cx="374.0" cy="249.4" r="2.1" fill="#2aa8b4" stroke="rgba(255,255,255,0.4)" stroke-width="1.6"/>
<circle cx="385.2" cy="248.2" r="2.1" fill="#2aa8b4" stroke="rgba(255,255,255,0.4)" stroke-width="1.6"/>
<circle cx="396.4" cy="245.7" r="2.1" fill="#2aa8b4" stroke="rgba(255,255,255,0.4)" stroke-width="1.6"/>
<circle cx="407.6" cy="242.2" r="2.1" fill="#2aa8b4" stroke="rgba(255,255,255,0.4)" stroke-width="1.6"/>
<circle cx="418.8" cy="237.1" r="2.1" fill="#2aa8b4" stroke="rgba(255,255,255,0.4)" stroke-width="1.6"/>
<circle cx="430.0" cy="233.9" r="2.1" fill="#2aa8b4" stroke="rgba(255,255,255,0.4)" stroke-width="1.6"/>
<circle cx="441.2" cy="233.1" r="2.1" fill="#2aa8b4" stroke="rgba(255,255,255,0.4)" stroke-width="1.6"/>
<circle cx="452.4" cy="229.2" r="2.1" fill="#2aa8b4" stroke="rgba(255,255,255,0.4)" stroke-width="1.6"/>
<circle cx="463.6" cy="219.2" r="2.1" fill="#2aa8b4" stroke="rgba(255,255,255,0.4)" stroke-width="1.6"/>
<circle cx="474.8" cy="215.7" r="2.1" fill="#2aa8b4" stroke="rgba(255,255,255,0.4)" stroke-width="1.6"/>
<circle cx="486.0" cy="207.5" r="2.1" fill="#2aa8b4" stroke="rgba(255,255,255,0.4)" stroke-width="1.6"/>
<circle cx="497.3" cy="204.1" r="2.1" fill="#2aa8b4" stroke="rgba(255,255,255,0.4)" stroke-width="1.6"/>
<circle cx="508.5" cy="210.3" r="2.1" fill="#2aa8b4" stroke="rgba(255,255,255,0.4)" stroke-width="1.6"/>
<circle cx="519.7" cy="204.5" r="2.1" fill="#2aa8b4" stroke="rgba(255,255,255,0.4)" stroke-width="1.6"/>
<circle cx="530.9" cy="195.1" r="2.1" fill="#2aa8b4" stroke="rgba(255,255,255,0.4)" stroke-width="1.6"/>
<circle cx="542.1" cy="208.8" r="2.1" fill="#2aa8b4" stroke="rgba(255,255,255,0.4)" stroke-width="1.6"/>
<circle cx="553.3" cy="207.3" r="2.1" fill="#2aa8b4" stroke="rgba(255,255,255,0.4)" stroke-width="1.6"/>
<circle cx="564.5" cy="201.4" r="2.1" fill="#2aa8b4" stroke="rgba(255,255,255,0.4)" stroke-width="1.6"/>
<circle cx="575.7" cy="205.3" r="2.1" fill="#2aa8b4" stroke="rgba(255,255,255,0.4)" stroke-width="1.6"/>
<circle cx="586.9" cy="205.7" r="2.1" fill="#2aa8b4" stroke="rgba(255,255,255,0.4)" stroke-width="1.6"/>
<circle cx="598.1" cy="208.0" r="2.1" fill="#2aa8b4" stroke="rgba(255,255,255,0.4)" stroke-width="1.6"/>
<circle cx="609.3" cy="209.6" r="2.1" fill="#2aa8b4" stroke="rgba(255,255,255,0.4)" stroke-width="1.6"/>
<circle cx="620.5" cy="214.3" r="2.1" fill="#2aa8b4" stroke="rgba(255,255,255,0.4)" stroke-width="1.6"/>
<circle cx="631.8" cy="216.7" r="2.1" fill="#2aa8b4" stroke="rgba(255,255,255,0.4)" stroke-width="1.6"/>
<circle cx="643.0" cy="212.7" r="2.1" fill="#2aa8b4" stroke="rgba(255,255,255,0.4)" stroke-width="1.6"/>
<circle cx="654.2" cy="216.7" r="2.1" fill="#2aa8b4" stroke="rgba(255,255,255,0.4)" stroke-width="1.6"/>
<circle cx="665.4" cy="221.4" r="2.1" fill="#2aa8b4" stroke="rgba(255,255,255,0.4)" stroke-width="1.6"/>
<circle cx="676.6" cy="219.2" r="2.1" fill="#2aa8b4" stroke="rgba(255,255,255,0.4)" stroke-width="1.6"/>
<circle cx="687.8" cy="210.8" r="2.1" fill="#2aa8b4" stroke="rgba(255,255,255,0.4)" stroke-width="1.6"/>
<circle cx="699.0" cy="209.4" r="2.1" fill="#2aa8b4" stroke="rgba(255,255,255,0.4)" stroke-width="1.6"/>
<circle cx="710.2" cy="208.8" r="2.1" fill="#2aa8b4" stroke="rgba(255,255,255,0.4)" stroke-width="1.6"/>
<circle cx="721.4" cy="205.1" r="2.1" fill="#2aa8b4" stroke="rgba(255,255,255,0.4)" stroke-width="1.6"/>
<circle cx="732.6" cy="197.5" r="2.1" fill="#2aa8b4" stroke="rgba(255,255,255,0.4)" stroke-width="1.6"/>
<circle cx="743.8" cy="203.3" r="2.1" fill="#2aa8b4" stroke="rgba(255,255,255,0.4)" stroke-width="1.6"/>
<circle cx="755.0" cy="209.4" r="2.1" fill="#2aa8b4" stroke="rgba(255,255,255,0.4)" stroke-width="1.6"/>
<circle cx="766.2" cy="216.5" r="2.1" fill="#2aa8b4" stroke="rgba(255,255,255,0.4)" stroke-width="1.6"/>
<circle cx="777.5" cy="219.0" r="2.1" fill="#2aa8b4" stroke="rgba(255,255,255,0.4)" stroke-width="1.6"/>
<circle cx="788.7" cy="214.9" r="2.1" fill="#2aa8b4" stroke="rgba(255,255,255,0.4)" stroke-width="1.6"/>
<circle cx="799.9" cy="215.7" r="2.1" fill="#2aa8b4" stroke="rgba(255,255,255,0.4)" stroke-width="1.6"/>
<circle cx="811.1" cy="219.2" r="2.1" fill="#2aa8b4" stroke="rgba(255,255,255,0.4)" stroke-width="1.6"/>
<circle cx="822.3" cy="222.0" r="2.1" fill="#2aa8b4" stroke="rgba(255,255,255,0.4)" stroke-width="1.6"/>
<circle cx="833.5" cy="226.5" r="2.1" fill="#2aa8b4" stroke="rgba(255,255,255,0.4)" stroke-width="1.6"/>
<circle cx="844.7" cy="224.5" r="2.1" fill="#2aa8b4" stroke="rgba(255,255,255,0.4)" stroke-width="1.6"/>
<circle cx="855.9" cy="229.4" r="2.1" fill="#1cbcd8" stroke="rgba(255,255,255,0.4)" stroke-width="1.6"/>
</g></svg>
<div class="leg" style="top:46px"><i style="background:#19c3e0"></i><span>Rx Bytes</span></div>
<div class="leg" style="top:64.7px"><i style="background:#f9a33c"></i><span>Tx Bytes</span></div>
<div class="leg" style="top:83.3px"><i style="background:#5b9fd8"></i><span>Total Bytes</span></div>
<table>
<tr><th></th><th>Min</th><th>Max</th><th>Avg</th><th>95th PercAvg</th><th>95th PercVal</th></tr>
<tr><td style="color:#6aa6dc">Total Bytes</td><td>6.798 G</td><td>144.423 G</td><td>58.863 G</td><td>54.308 G</td><td>128.666 G</td></tr>
<tr><td style="color:#1ebde0">Rx Bytes</td><td>2.127 G</td><td>41.3 G</td><td>16.854 G</td><td>15.575 G</td><td>35.36 G</td></tr>
<tr><td style="color:#f8a652">Tx Bytes</td><td>4.489 G</td><td>109.868 G</td><td>42.009 G</td><td>38.372 G</td><td>96.269 G</td></tr>
</table>
</body></html>
